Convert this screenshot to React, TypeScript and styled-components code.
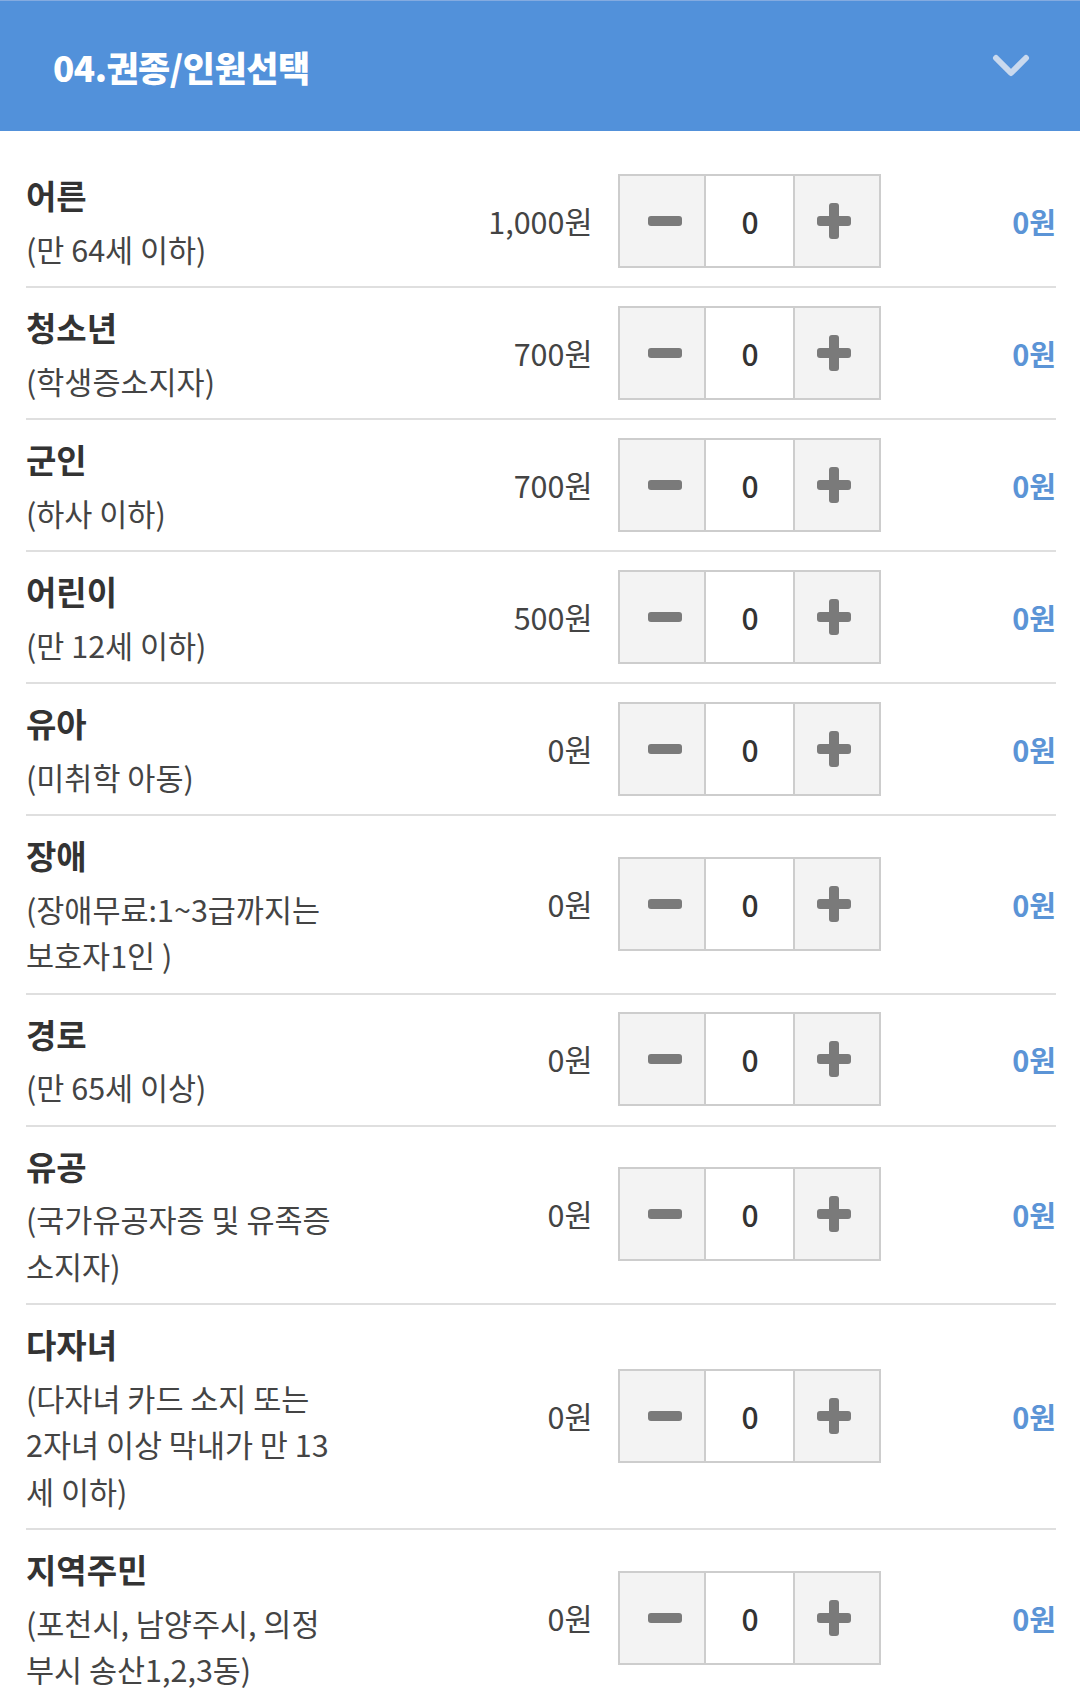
import styled, { createGlobalStyle } from 'styled-components'

const GlobalStyle = createGlobalStyle`
  body {
    margin: 0;
    background: #fff;
    font-family: 'Noto Sans CJK KR', 'Noto Sans', sans-serif;
  }
`

const Header = styled.header`
  display: flex;
  align-items: center;
  justify-content: space-between;
  height: 130px;
  padding: 0 50px 0 53px;
  background-color: #5291da;
  border-top: 1px solid #84abe0;
`
const HeaderTitle = styled.h2`
  margin: 0;
  color: #fff;
  font-size: 35px;
  font-weight: 900;
  letter-spacing: -0.5px;
`
const Chevron = styled.svg`
  width: 38px;
  height: 26px;
`

const List = styled.ul`
  list-style: none;
  margin: 0;
  padding: 25px 24px 0 26px;
`
const Row = styled.li`
  display: flex;
  align-items: center;
  padding: 13px 0 14px;
  border-bottom: 2px solid #dfdfdf;
`
const Label = styled.div`
  width: 33%;
  flex-shrink: 0;
`
const Title = styled.div`
  margin: 4px 0 7.5px;
  font-size: 33px;
  font-weight: 700;
  line-height: 45px;
  color: #333;
`
const Desc = styled.div`
  font-size: 30.5px;
  line-height: 46.5px;
  color: #444;
`
const Price = styled.div`
  width: 22%;
  flex-shrink: 0;
  text-align: right;
  font-size: 30.5px;
  color: #444;
`
const Stepper = styled.div`
  display: flex;
  margin-left: 26px;
  height: 90px;
  border: 2px solid #cdcdcd;
`
const StepButton = styled.button<{ $side: 'left' | 'right' }>`
  display: flex;
  align-items: center;
  justify-content: center;
  width: 84px;
  padding: ${({ $side }) => ($side === 'left' ? '0 0 0 6px' : '0 6px 0 0')};
  border: none;
  background-color: #f3f3f3;
  cursor: pointer;
`
const Count = styled.div`
  display: flex;
  align-items: center;
  justify-content: center;
  width: 87px;
  border-left: 2px solid #cdcdcd;
  border-right: 2px solid #cdcdcd;
  background: #fff;
  font-size: 30px;
  font-weight: 500;
  color: #333;
`
const Total = styled.div`
  flex: 1;
  text-align: right;
  font-size: 29px;
  font-weight: 700;
  color: #5b94d6;
`

const MinusIcon = () => (
  <svg width="36" height="36" viewBox="0 0 36 36">
    <rect x="1" y="13" width="34" height="10" rx="3" fill="#7a7a7a" />
  </svg>
)
const PlusIcon = () => (
  <svg width="36" height="36" viewBox="0 0 36 36">
    <rect x="1" y="13" width="34" height="10" rx="3" fill="#7a7a7a" />
    <rect x="13" y="0" width="10" height="36" rx="3" fill="#7a7a7a" />
  </svg>
)

interface ITicket {
  name: string
  desc: string[]
  price: string
}

const tickets: ITicket[] = [
  { name: '어른', desc: ['(만 64세 이하)'], price: '1,000원' },
  { name: '청소년', desc: ['(학생증소지자)'], price: '700원' },
  { name: '군인', desc: ['(하사 이하)'], price: '700원' },
  { name: '어린이', desc: ['(만 12세 이하)'], price: '500원' },
  { name: '유아', desc: ['(미취학 아동)'], price: '0원' },
  { name: '장애', desc: ['(장애무료:1~3급까지는', '보호자1인 )'], price: '0원' },
  { name: '경로', desc: ['(만 65세 이상)'], price: '0원' },
  { name: '유공', desc: ['(국가유공자증 및 유족증', '소지자)'], price: '0원' },
  {
    name: '다자녀',
    desc: ['(다자녀 카드 소지 또는', '2자녀 이상 막내가 만 13', '세 이하)'],
    price: '0원',
  },
  {
    name: '지역주민',
    desc: ['(포천시, 남양주시, 의정', '부시 송산1,2,3동)'],
    price: '0원',
  },
]

function App() {
  return (
    <>
      <GlobalStyle />
      <Header>
        <HeaderTitle>04.권종/인원선택</HeaderTitle>
        <Chevron viewBox="0 0 38 26">
          <path
            d="M4 5 L19 20 L34 5"
            fill="none"
            stroke="#c9d9ee"
            strokeWidth="6"
            strokeLinecap="round"
            strokeLinejoin="round"
          />
        </Chevron>
      </Header>
      <List>
        {tickets.map((ticket) => (
          <Row key={ticket.name}>
            <Label>
              <Title>{ticket.name}</Title>
              {ticket.desc.map((line) => (
                <Desc key={line}>{line}</Desc>
              ))}
            </Label>
            <Price>{ticket.price}</Price>
            <Stepper>
              <StepButton $side="left" aria-label="감소">
                <MinusIcon />
              </StepButton>
              <Count>0</Count>
              <StepButton $side="right" aria-label="증가">
                <PlusIcon />
              </StepButton>
            </Stepper>
            <Total>0원</Total>
          </Row>
        ))}
      </List>
    </>
  )
}

export default App
